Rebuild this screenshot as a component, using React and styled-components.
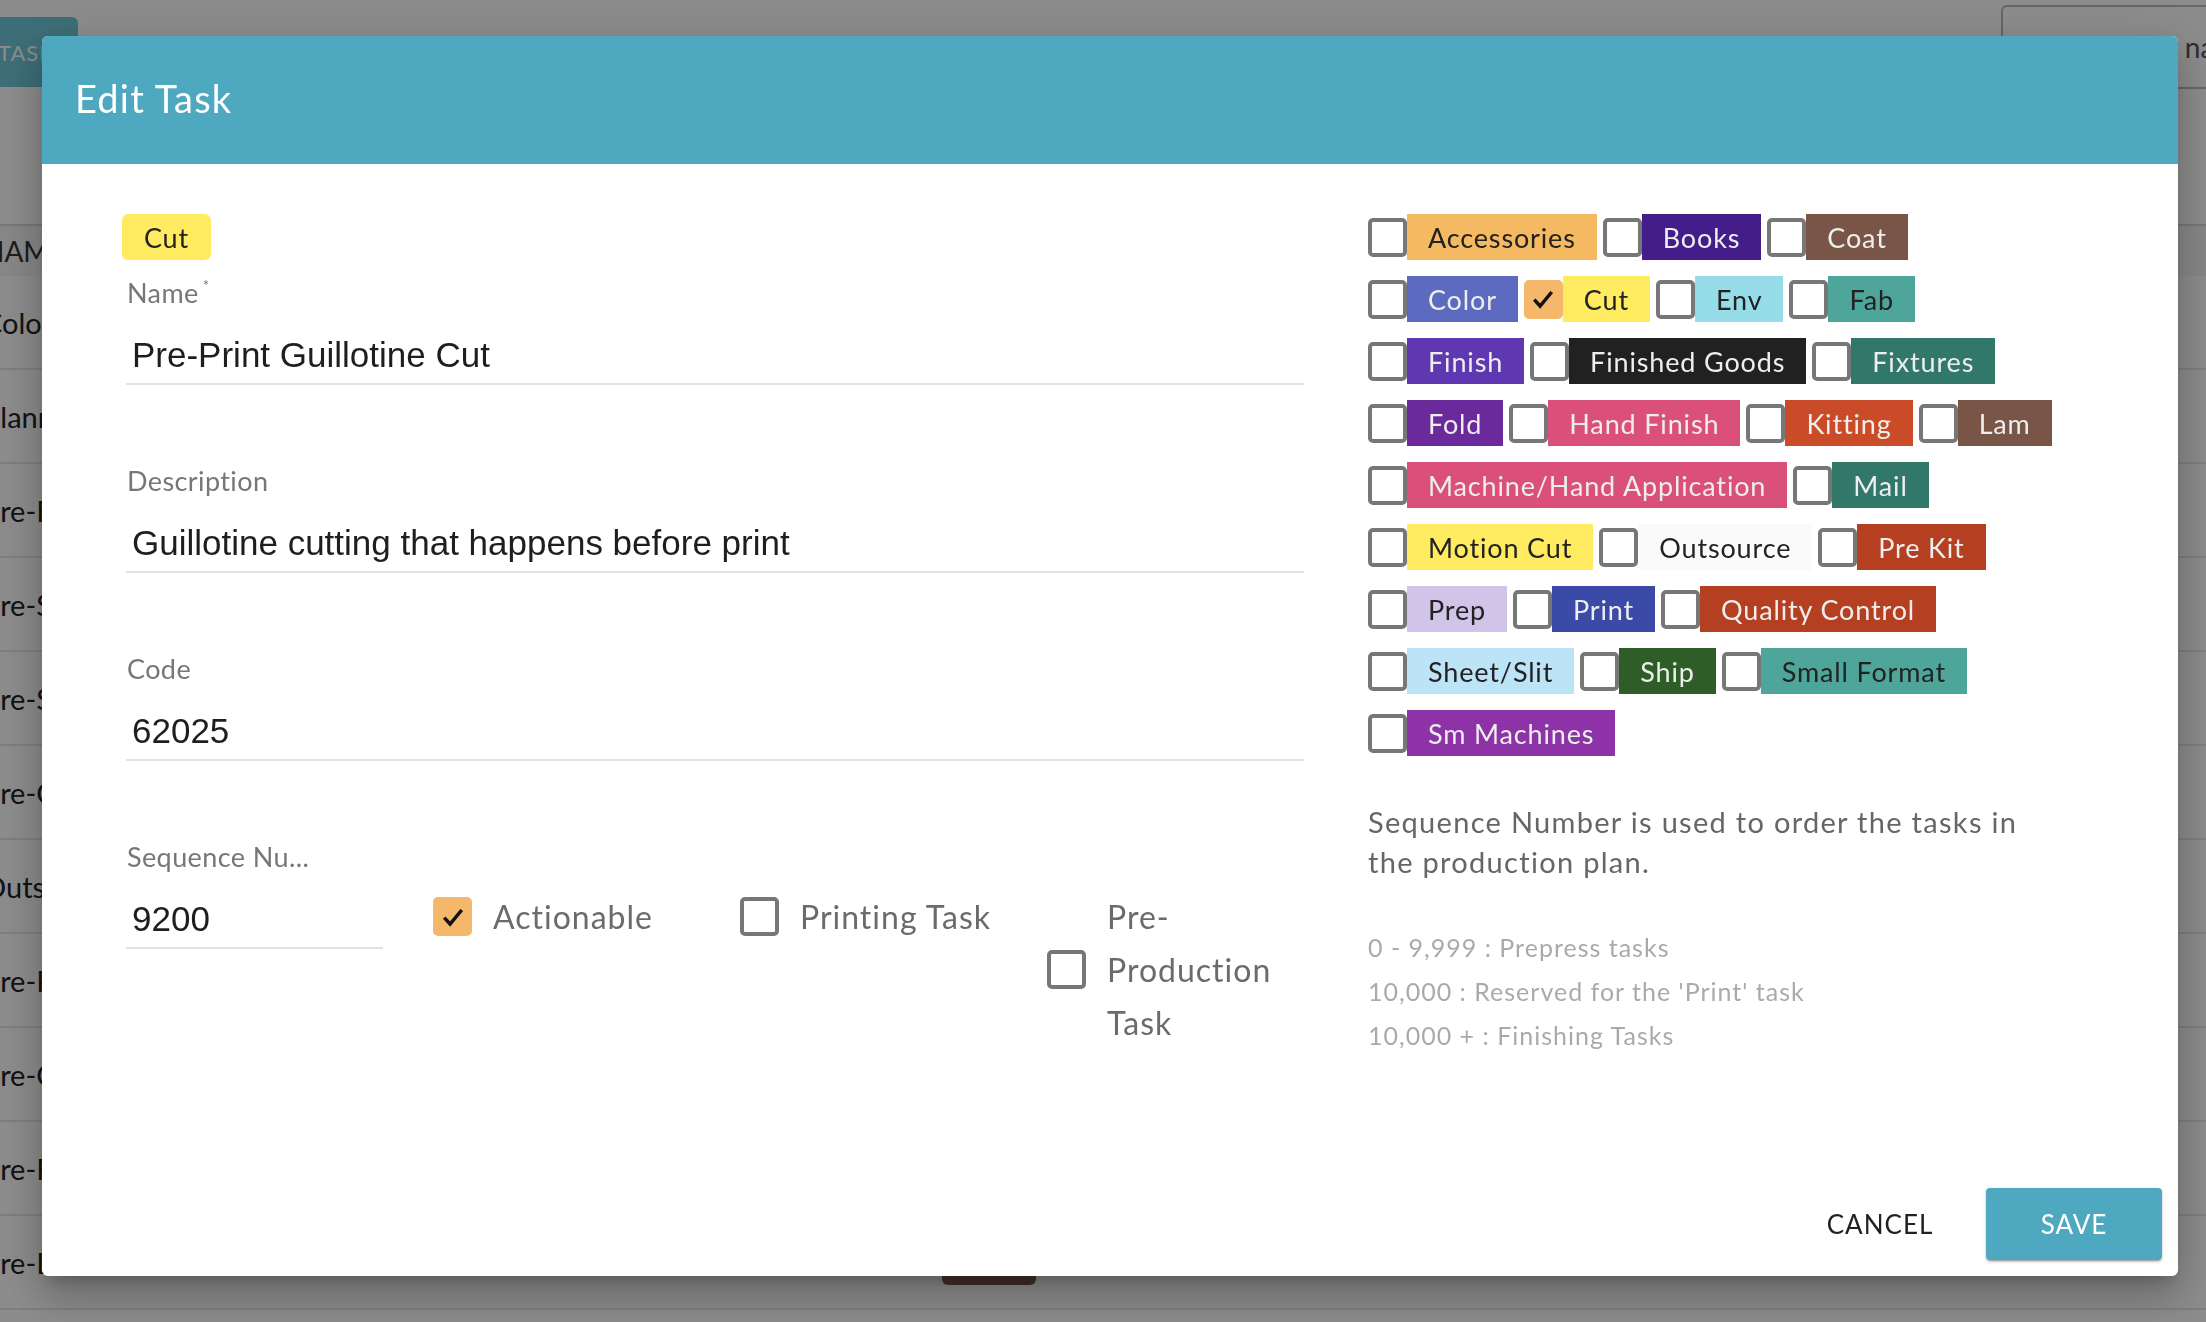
import React from "react";
import styled, { createGlobalStyle } from "styled-components";

const GlobalStyle = createGlobalStyle`
  html, body {
    margin: 0;
    padding: 0;
  }
  body {
    font-family: Lato, "Liberation Sans", sans-serif;
    background: #fff;
    overflow: hidden;
  }
  * {
    box-sizing: border-box;
  }
`;

const TAG_COLORS = {
  Accessories: ["#f5b961", "#222"],
  Books: ["#441d8a", "#eee"],
  Coat: ["#795548", "#eee"],
  Color: ["#5c6bc0", "#eee"],
  Cut: ["#ffeb5f", "#222"],
  Env: ["#96dbe8", "#222"],
  Fab: ["#4ea59a", "#222"],
  Finish: ["#5e37b1", "#eee"],
  "Finished Goods": ["#212121", "#eee"],
  Fixtures: ["#31786a", "#eee"],
  Fold: ["#6b2a9c", "#eee"],
  "Hand Finish": ["#db4f7b", "#eee"],
  Kitting: ["#ca4b28", "#eee"],
  Lam: ["#795548", "#eee"],
  "Machine/Hand Application": ["#db4f7b", "#eee"],
  Mail: ["#31786a", "#eee"],
  "Motion Cut": ["#ffeb5f", "#222"],
  Outsource: ["#fafafa", "#222"],
  "Pre Kit": ["#b43f21", "#eee"],
  Prep: ["#d1c4e9", "#222"],
  Print: ["#3a4aa6", "#eee"],
  "Quality Control": ["#b43f21", "#eee"],
  "Sheet/Slit": ["#bde3f7", "#222"],
  Ship: ["#2e5d27", "#eee"],
  "Small Format": ["#4ea59a", "#222"],
  "Sm Machines": ["#8e33a7", "#eee"],
};

const TAG_ROWS = [
  ["Accessories", "Books", "Coat"],
  ["Color", "Cut", "Env", "Fab"],
  ["Finish", "Finished Goods", "Fixtures"],
  ["Fold", "Hand Finish", "Kitting", "Lam"],
  ["Machine/Hand Application", "Mail"],
  ["Motion Cut", "Outsource", "Pre Kit"],
  ["Prep", "Print", "Quality Control"],
  ["Sheet/Slit", "Ship", "Small Format"],
  ["Sm Machines"],
];

const TABLE_ROWS = [
  ["Color Management", "Color"],
  ["Planning", "Prep"],
  ["Pre-Flight", "Prep"],
  ["Pre-Sort", "Prep"],
  ["Pre-Stage", "Prep"],
  ["Pre-Check", "Quality Control"],
  ["Outsource Prep", "Outsource"],
  ["Pre-Print Guillotine Cut", "Cut"],
  ["Pre-Coat", "Coat"],
  ["Pre-Fold", "Fold"],
  ["Pre-Lam", "Lam"],
];

/* ---------- page behind the dialog ---------- */

const Page = styled.div`
  width: 2260px;
  height: 1322px;
  margin-left: -40px;
  background: #fff;
`;

const TopBar = styled.div`
  height: 224px;
  display: flex;
  align-items: flex-start;
`;

const TasksButton = styled.div`
  margin: 17px 0 0 28px;
  height: 70px;
  padding: 0 10px;
  display: flex;
  align-items: center;
  background: #70c9da;
  color: #fff;
  border-radius: 6px;
  font-size: 22px;
  letter-spacing: 1px;
  text-transform: uppercase;
`;

const SearchBox = styled.div`
  margin: 5px 0 0 auto;
  width: 219px;
  height: 84px;
  border: 2px solid #bbb;
  border-right: none;
  border-radius: 6px 0 0 6px;
  padding-left: 56px;
  display: flex;
  align-items: center;
  font-size: 28px;
  color: #555;
  white-space: nowrap;
  overflow: hidden;
`;

const TableHead = styled.div`
  height: 52px;
  display: grid;
  grid-template-columns: 959px 1fr;
  align-items: center;
  padding-left: 23px;
  background: #f6f6f6;
  border-top: 2px solid #d8d8d8;
  font-size: 28px;
  color: #333;
  text-transform: uppercase;
`;

const TableRow = styled.div`
  height: 94px;
  display: grid;
  grid-template-columns: 959px 1fr;
  align-items: center;
  padding-left: 23px;
  border-bottom: 2px solid #e6e6e6;
  font-size: 29px;
  color: #222;
`;

const RowChip = styled.span`
  justify-self: start;
  height: 46px;
  padding: 0 22px;
  display: inline-flex;
  align-items: center;
  border-radius: 6px;
  font-size: 27px;
  background: ${(p) => p.$bg};
  color: ${(p) => p.$fg};
`;

const Backdrop = styled.div`
  position: fixed;
  inset: 0;
  background: rgba(0, 0, 0, 0.45);
`;

/* ---------- dialog ---------- */

const Dialog = styled.div`
  position: fixed;
  left: 42px;
  top: 36px;
  width: 2136px;
  height: 1240px;
  background: #fff;
  border-radius: 6px;
  overflow: hidden;
  display: flex;
  flex-direction: column;
  box-shadow: 0 11px 15px -7px rgba(0, 0, 0, 0.2),
    0 24px 38px 3px rgba(0, 0, 0, 0.14), 0 9px 46px 8px rgba(0, 0, 0, 0.12);
`;

const Header = styled.div`
  height: 128px;
  flex: none;
  display: flex;
  align-items: center;
  padding: 0 0 4px 33px;
  background: #4ea8bf;
  color: #fff;
  font-size: 38px;
  letter-spacing: 1.2px;
`;

const Body = styled.div`
  flex: 1;
  display: grid;
  grid-template-columns: 1178px 690px;
  column-gap: 64px;
  align-items: start;
  padding: 50px 0 0 84px;
`;

const LeftCol = styled.div`
  display: flex;
  flex-direction: column;
  align-items: stretch;
`;

const TopChip = styled.span`
  align-self: flex-start;
  margin-left: -4px;
  height: 46px;
  padding: 0 22px;
  display: inline-flex;
  align-items: center;
  border-radius: 6px;
  background: #ffeb5f;
  color: #222;
  font-size: 27px;
  letter-spacing: 0.8px;
`;

const Field = styled.div`
  margin-top: ${(p) => p.$top || 80}px;
`;

const Label = styled.div`
  height: 32px;
  line-height: 32px;
  padding-left: 1px;
  font-size: 27px;
  letter-spacing: 0.4px;
  color: #777;
  white-space: nowrap;

  sup {
    position: relative;
    top: -12px;
    margin-left: 4px;
    font-size: 15px;
    line-height: 0;
    vertical-align: baseline;
  }
`;

const TextInput = styled.input`
  display: block;
  width: 100%;
  height: 52px;
  margin-top: 24px;
  padding: 0 0 6px 6px;
  border: none;
  border-bottom: 2px solid #e2e2e2;
  outline: none;
  background: transparent;
  font-family: "Liberation Sans", Arial, sans-serif;
  font-size: 35px;
  color: #1e1e1e;
`;

const SequenceRow = styled.div`
  margin-top: 80px;
  display: grid;
  grid-template-columns: repeat(4, 257px);
  column-gap: 50px;
  align-items: start;
`;

const CheckControl = styled.label`
  margin-top: 49px;
  display: flex;
  align-items: center;
  gap: 21px;
  font-size: 32px;
  line-height: 53px;
  letter-spacing: 1px;
  color: #6b6b6b;
`;

const Box = styled.span`
  flex: none;
  width: 39px;
  height: 39px;
  border-radius: 5px;
  border: 4px solid ${(p) => (p.$checked ? "#f5b86a" : "#777")};
  background: ${(p) => (p.$checked ? "#f5b86a" : "#fff")};
  display: flex;
  align-items: center;
  justify-content: center;
`;

const RightCol = styled.div`
  display: flex;
  flex-direction: column;
`;

const TagList = styled.div`
  display: flex;
  flex-direction: column;
  gap: 16px;
`;

const TagRow = styled.div`
  display: flex;
  align-items: center;
  gap: 6px;
`;

const TagItem = styled.label`
  display: flex;
  align-items: center;
`;

const Tag = styled.span`
  height: 46px;
  padding: 0 21px;
  display: inline-flex;
  align-items: center;
  background: ${(p) => p.$bg};
  color: ${(p) => p.$fg};
  font-size: 27px;
  letter-spacing: 0.85px;
  white-space: nowrap;
`;

const Help = styled.p`
  margin: 46px 0 0;
  font-size: 29px;
  line-height: 40px;
  letter-spacing: 1.3px;
  color: #666;
`;

const Hints = styled.div`
  margin-top: 43px;
  font-size: 25px;
  line-height: 44px;
  letter-spacing: 1px;
  color: #aaa;
`;

const Footer = styled.div`
  flex: none;
  display: flex;
  justify-content: flex-end;
  gap: 18px;
  padding: 0 16px 16px;
`;

const Button = styled.button`
  min-width: 176px;
  height: 72px;
  border: none;
  border-radius: 4px;
  font-family: Lato, sans-serif;
  font-size: 26px;
  letter-spacing: 1px;
  text-transform: uppercase;
  background: ${(p) => (p.$primary ? "#4ea8bf" : "transparent")};
  color: ${(p) => (p.$primary ? "#fff" : "#222")};
  box-shadow: ${(p) =>
    p.$primary
      ? "0 3px 1px -2px rgba(0,0,0,.2), 0 2px 2px 0 rgba(0,0,0,.14), 0 1px 5px 0 rgba(0,0,0,.12)"
      : "none"};
`;

const Check = ({ checked }) => (
  <Box $checked={checked}>
    {checked && (
      <svg width="28" height="28" viewBox="0 0 24 24">
        <path d="M4.5 12.5l5 5.5L19.5 6" fill="none" stroke="#111" strokeWidth="3" />
      </svg>
    )}
  </Box>
);

export default function App() {
  return (
    <>
      <GlobalStyle />
      <Page>
        <TopBar>
          <TasksButton>Tasks</TasksButton>
          <SearchBox>Search by name</SearchBox>
        </TopBar>
        <TableHead>
          <span>Name</span>
          <span>Tag</span>
        </TableHead>
        {TABLE_ROWS.map(([name, tag]) => (
          <TableRow key={name}>
            <span>{name}</span>
            <RowChip $bg={TAG_COLORS[tag][0]} $fg={TAG_COLORS[tag][1]}>
              {tag}
            </RowChip>
          </TableRow>
        ))}
      </Page>
      <Backdrop />
      <Dialog>
        <Header>Edit Task</Header>
        <Body>
          <LeftCol>
            <TopChip>Cut</TopChip>
            <Field $top={17}>
              <Label>
                Name<sup>*</sup>
              </Label>
              <TextInput readOnly value="Pre-Print Guillotine Cut" />
            </Field>
            <Field>
              <Label>Description</Label>
              <TextInput readOnly value="Guillotine cutting that happens before print" />
            </Field>
            <Field>
              <Label>Code</Label>
              <TextInput readOnly value="62025" />
            </Field>
            <SequenceRow>
              <div>
                <Label>Sequence Nu...</Label>
                <TextInput readOnly value="9200" />
              </div>
              <CheckControl>
                <Check checked />
                <span>Actionable</span>
              </CheckControl>
              <CheckControl>
                <Check />
                <span>Printing Task</span>
              </CheckControl>
              <CheckControl>
                <Check />
                <span>Pre-Production Task</span>
              </CheckControl>
            </SequenceRow>
          </LeftCol>
          <RightCol>
            <TagList>
              {TAG_ROWS.map((row, i) => (
                <TagRow key={i}>
                  {row.map((name) => (
                    <TagItem key={name}>
                      <Check checked={name === "Cut"} />
                      <Tag $bg={TAG_COLORS[name][0]} $fg={TAG_COLORS[name][1]}>
                        {name}
                      </Tag>
                    </TagItem>
                  ))}
                </TagRow>
              ))}
            </TagList>
            <Help>
              Sequence Number is used to order the tasks in the production plan.
            </Help>
            <Hints>
              <div>0 - 9,999 : Prepress tasks</div>
              <div>10,000 : Reserved for the 'Print' task</div>
              <div>10,000 + : Finishing Tasks</div>
            </Hints>
          </RightCol>
        </Body>
        <Footer>
          <Button>Cancel</Button>
          <Button $primary>Save</Button>
        </Footer>
      </Dialog>
    </>
  );
}
